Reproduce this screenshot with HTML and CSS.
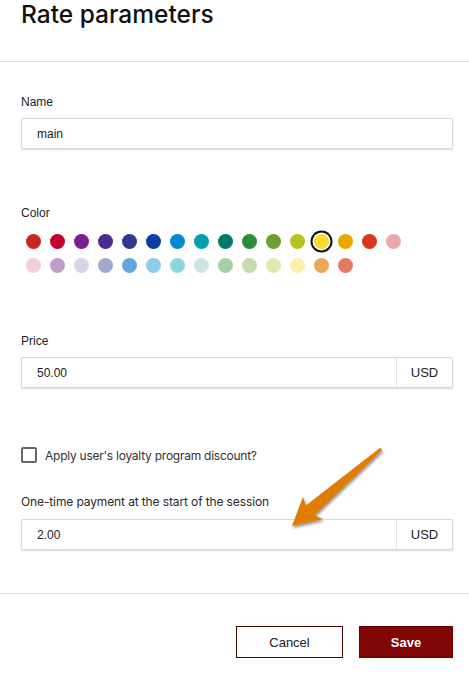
FILE: index.html
```html
<!DOCTYPE html>
<html>
<head>
    <meta charset="UTF-8">
    <title>Rate parameters</title>
    <link rel="stylesheet" href="styles.css">
</head>
<body>
    <div class="dialog">
        <div class="dialog-header">
            <h1 class="dialog-title">Rate parameters</h1>
        </div>

        <div class="dialog-body">
            <div class="field">
                <div class="field-label">Name</div>
                <div class="input-box">
                    <input class="input" type="text" value="main">
                </div>
            </div>

            <div class="field field-color">
                <div class="field-label">Color</div>
                <div class="palette" id="palette"></div>
            </div>

            <div class="field field-price">
                <div class="field-label">Price</div>
                <div class="input-box">
                    <input class="input" type="text" value="50.00">
                    <span class="addon">USD</span>
                </div>
            </div>

            <label class="check-row">
                <span class="checkbox"></span>
                <span class="check-label">Apply user's loyalty program discount?</span>
            </label>

            <div class="field field-fee">
                <div class="field-label field-label-alt">One-time payment at the start of the session</div>
                <div class="input-box">
                    <input class="input" type="text" value="2.00">
                    <span class="addon">USD</span>
                </div>
            </div>
        </div>

        <div class="dialog-footer">
            <button class="btn btn-cancel">Cancel</button>
            <button class="btn btn-save">Save</button>
        </div>

        <!-- hint arrow pointing at the fee input -->
        <svg class="hint-arrow" width="469" height="675" viewBox="0 0 469 675">
            <defs>
                <filter id="arrow-shadow" x="-20%" y="-20%" width="140%" height="140%">
                    <feDropShadow dx="1" dy="2" stdDeviation="1.5" flood-color="#000" flood-opacity="0.45"/>
                </filter>
            </defs>
            <polygon points="380.2,447.7 382.2,449.9 314.4,515.2 323,519 292,526 303,497 305.9,505.4" fill="#e07b00" filter="url(#arrow-shadow)"/>
        </svg>
    </div>

    <script>
        const colors = [
            '#c62828', '#c4002f', '#7b1f8e', '#4a2a8c', '#2e3a8c', '#0a3fa0', '#0288d1', '#00a0b0',
            '#00796b', '#2e8b3a', '#6aa030', '#b5c425', '#f5dc30', '#e8a800', '#d4381a', '#e8a8a8',
            '#f0d0dc', '#c39bc9', '#dbd4e8', '#a0a8cc', '#62a6dc', '#90cbe8', '#8ed6de', '#cce4e4',
            '#a7cfa8', '#c5dbb0', '#e3e8b0', '#faf0b0', '#e8a855', '#e07b65'
        ];
        const selected = '#f5dc30';
        const palette = document.getElementById('palette');

        colors.forEach((c) => {
            const cell = document.createElement('span');
            cell.className = 'swatch-cell';
            const dot = document.createElement('span');
            dot.className = 'swatch' + (c === selected ? ' selected' : '');
            dot.style.background = c;
            cell.appendChild(dot);
            palette.appendChild(cell);
        });
    </script>
</body>
</html>
```

FILE: styles.css
```css
* {
    margin: 0;
    padding: 0;
    box-sizing: border-box;
}

body {
    font-family: 'Liberation Sans', Arial, sans-serif;
    background: #fff;
    color: #222;
    width: 469px;
    height: 675px;
    overflow: hidden;
}

.dialog {
    position: relative;
    height: 100%;
}

.dialog-header {
    padding: 0 16px 32px 21px;
    border-bottom: 1px solid #dedede;
}

.dialog-title {
    font-family: 'Inter', 'Noto Sans', sans-serif;
    font-size: 24.5px;
    font-weight: 500;
    line-height: 29px;
    color: #111;
}

.dialog-body {
    padding: 33px 16px 43px 21px;
    border-bottom: 1px solid #dedede;
}

.field-label {
    font-size: 12px;
    line-height: 14px;
    margin-bottom: 9px;
    color: #222;
}

.field-label-alt {
    font-family: 'Inter', 'Noto Sans', sans-serif;
    font-size: 12px;
    letter-spacing: -0.12px;
    margin-bottom: 10px;
    color: #2a2a2a;
}

.input-box {
    display: flex;
    height: 31px;
    border: 1px solid #d9d9d9;
    border-radius: 2px;
    box-shadow: 0 1px 2px rgba(0, 0, 0, 0.14);
    background: #fff;
}

.input {
    flex: 1;
    min-width: 0;
    border: none;
    outline: none;
    background: transparent;
    padding: 0 15px;
    font-family: 'Liberation Sans', Arial, sans-serif;
    font-size: 12px;
    color: #222;
}

.addon {
    width: 56px;
    border-left: 1px solid #e2e2e2;
    display: flex;
    align-items: center;
    justify-content: center;
    font-size: 13px;
    color: #222;
}

.field-color {
    margin-top: 57px;
}

.field-color .field-label {
    margin-bottom: 14px;
}

/* 16 swatches per row */
.palette {
    display: grid;
    grid-template-columns: repeat(16, 24px);
    row-gap: 9px;
}

.swatch-cell {
    width: 24px;
    height: 15px;
    display: flex;
    justify-content: center;
}

.swatch {
    width: 15px;
    height: 15px;
    border-radius: 50%;
}

.swatch.selected {
    box-shadow: 0 0 0 1.5px #fff, 0 0 0 3.5px #111;
}

.field-price {
    margin-top: 61px;
}

.check-row {
    display: flex;
    align-items: center;
    gap: 8px;
    margin-top: 59px;
    height: 16px;
}

.checkbox {
    width: 16px;
    height: 16px;
    border: 2px solid #666;
    border-radius: 2px;
}

.check-label {
    font-family: 'Inter', 'Noto Sans', sans-serif;
    font-size: 12px;
    letter-spacing: -0.25px;
    color: #333;
}

.field-fee {
    margin-top: 32px;
}

.dialog-footer {
    display: flex;
    justify-content: flex-end;
    gap: 16px;
    padding: 32px 16px 0 21px;
}

.btn {
    height: 32px;
    font-family: 'Liberation Sans', Arial, sans-serif;
    font-size: 13px;
    cursor: pointer;
}

.btn-cancel {
    width: 107px;
    background: #fff;
    border: 1px solid #4d0000;
    color: #222;
}

.btn-save {
    width: 94px;
    background: #800505;
    border: 1px solid #6e0000;
    color: #fff;
    font-weight: bold;
}

.hint-arrow {
    position: absolute;
    top: 0;
    left: 0;
    pointer-events: none;
}
```
